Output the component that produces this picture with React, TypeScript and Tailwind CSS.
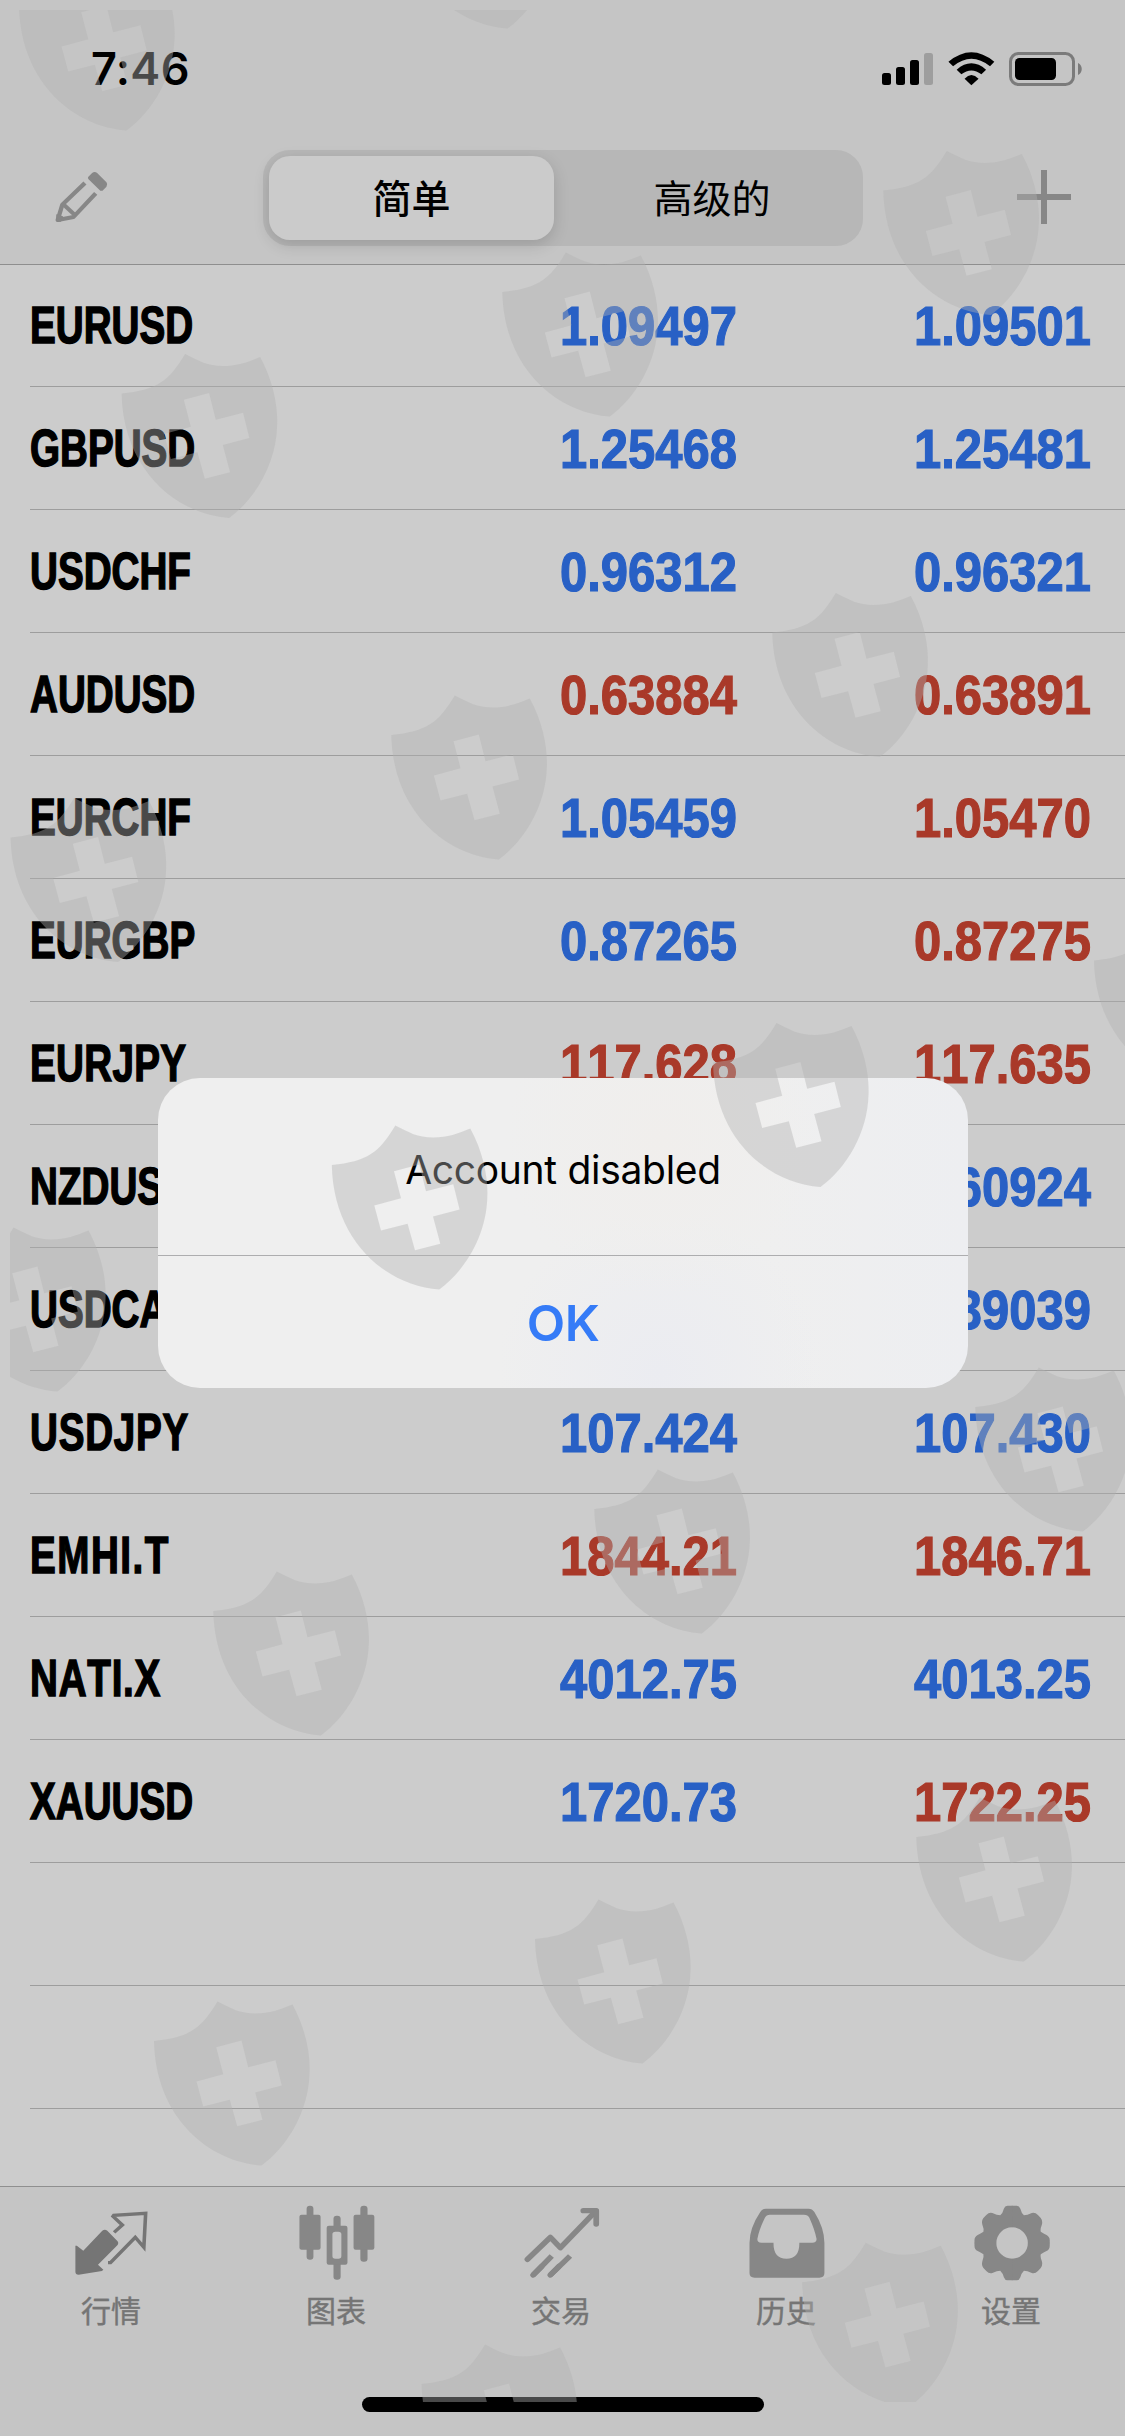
// mobile quotes screen with the "Account disabled" alert
import type { ReactNode } from 'react';

interface Quote {
  symbol: string;
  bid: string;
  ask: string;
  bidUp: boolean;
  askUp: boolean;
  tracking?: string;
}

// bids that sit fully behind the alert are left empty
const quotes: Quote[] = [
  { symbol: 'EURUSD', bid: '1.09497', ask: '1.09501', bidUp: true, askUp: true },
  { symbol: 'GBPUSD', bid: '1.25468', ask: '1.25481', bidUp: true, askUp: true },
  { symbol: 'USDCHF', bid: '0.96312', ask: '0.96321', bidUp: true, askUp: true },
  { symbol: 'AUDUSD', bid: '0.63884', ask: '0.63891', bidUp: false, askUp: false },
  { symbol: 'EURCHF', bid: '1.05459', ask: '1.05470', bidUp: true, askUp: false },
  { symbol: 'EURGBP', bid: '0.87265', ask: '0.87275', bidUp: true, askUp: false },
  { symbol: 'EURJPY', bid: '117.628', ask: '117.635', bidUp: false, askUp: false, tracking: 'tracking-[0.4px]' },
  { symbol: 'NZDUSD', bid: '', ask: '0.60924', bidUp: true, askUp: true },
  { symbol: 'USDCAD', bid: '', ask: '1.39039', bidUp: true, askUp: true },
  { symbol: 'USDJPY', bid: '107.424', ask: '107.430', bidUp: true, askUp: true, tracking: 'tracking-[1px]' },
  { symbol: 'EMHI.T', bid: '1844.21', ask: '1846.71', bidUp: false, askUp: false, tracking: 'tracking-[2px]' },
  { symbol: 'NATI.X', bid: '4012.75', ask: '4013.25', bidUp: true, askUp: true, tracking: 'tracking-[1px]' },
  { symbol: 'XAUUSD', bid: '1720.73', ask: '1722.25', bidUp: true, askUp: false },
];

// top-left peak of each watermark shield
const shields: [number, number][] = [
  [463, -135], [82, -33],
  [946.3, 151.5], [565.3, 253], [184.6, 354.5],
  [835.3, 593.5], [454.3, 696], [73.6, 798.5],
  [1157, 921.5], [776, 1023.5], [394.8, 1126], [13, 1228],
  [1038.3, 1368], [657.3, 1470], [276.3, 1572],
  [979.3, 1798], [598, 1900], [217, 2002],
  [865.2, 2243.3], [484.6, 2345],
];

const SHIELD =
  'M0 0C14 7 22 12 38 12C52 12 63 8 75 3C88 27 93 52 92 72C91 110 70 145 44 164C-10 160 -62 115 -63.5 39.5C-28 36 -16 27 0 0Z' +
  'M-1.3 45.7L5.7 72.7L-21 80L-14.3 105L12.3 98.3L19.7 124.7L45 118.3L37.7 91L64.3 84L58 58.7L30.7 65.7L24 39Z';

function Watermark() {
  return (
    <svg className="pointer-events-none absolute inset-0 z-30" width="1125" height="2436" viewBox="0 0 1125 2436">
      <clipPath id="wm">
        <rect x="10" y="10" width="1115" height="2392" />
      </clipPath>
      <g clipPath="url(#wm)" fill="#b1b1b1" fillOpacity="0.41" fillRule="evenodd">
        {shields.map(([x, y]) => (
          <path key={`${x}-${y}`} d={SHIELD} transform={`translate(${x + 0.5} ${y - 0.5})`} />
        ))}
      </g>
    </svg>
  );
}

function StatusBar() {
  return (
    <div className="flex h-[139px] items-center justify-between pl-[91px] pr-[42px]">
      <span className="pb-[2px] font-['Inter'] text-[45px] font-semibold leading-none tracking-[0.3px] text-black">7:46</span>
      <div className="flex items-center pb-[2px]">
        <svg width="52" height="34" viewBox="0 0 52 34">
          <rect x="0" y="21" width="9" height="12" rx="2.5" />
          <rect x="14" y="15" width="9" height="18" rx="2.5" />
          <rect x="28" y="8" width="9" height="25" rx="2.5" />
          <rect x="42" y="1" width="9" height="32" rx="2.5" fill="#9e9e9e" />
        </svg>
        <svg className="ml-[13px]" width="49" height="34" viewBox="1070 156 136.7 102" preserveAspectRatio="none">
          <path d="M1074 185Q1138 128 1202 185L1190 199Q1138 154 1087 199Z" />
          <path d="M1097 209Q1138 171 1179 209L1166 223Q1138 200 1110 223Z" />
          <path d="M1119 236Q1138 214 1158 236L1138 256Z" />
        </svg>
        <svg className="ml-[13px]" width="74" height="34" viewBox="0 0 74 34">
          <rect x="1.5" y="1.5" width="63" height="31" rx="8" fill="none" stroke="#7b7b7b" strokeWidth="3" />
          <rect x="6" y="6" width="41" height="22" rx="4.5" />
          <path d="M69 11C74 13 74 21 69 23Z" fill="#7b7b7b" />
        </svg>
      </div>
    </div>
  );
}

function NavBar() {
  return (
    <div className="flex h-[125px] items-start pt-[11px]">
      <div className="flex h-24 w-[263px] items-center pb-[3px] pl-[54px]">
        <svg width="56" height="54" viewBox="150.7 507 156.2 162" preserveAspectRatio="none" fill="#878787">
          <path d="M246 528L257 516Q264 510 271 516L297 544Q302 551 297 557L286 569Q281 571 277 566L247 535Q244 531 246 528Z" />
          <path d="M237 546L174 611L161 657L205 648L267 577" fill="none" stroke="#878787" strokeWidth="12" strokeLinejoin="round" />
          <path d="M177 610L210 643" fill="none" stroke="#878787" strokeWidth="12" />
          <path d="M157 640L176 646L170 662L160 663Q155 662 157 655Z" />
        </svg>
      </div>
      <div className="flex h-24 w-[600px] rounded-[27px] bg-[#b7b7b7] p-[6px] font-['Noto_Sans_CJK_SC',sans-serif] text-[39px] leading-none text-black">
        <div className="flex h-[84px] w-[285px] items-center justify-center rounded-[21px] bg-[#cbcbcb] pb-[4px] font-medium shadow-[0_5px_16px_rgba(0,0,0,0.15)]">
          简单
        </div>
        <div className="flex flex-1 items-center justify-center pb-[4px] pl-[13px]">高级的</div>
      </div>
      <div className="flex h-24 flex-1 items-center justify-end pb-[3px] pr-[54px]">
        <svg width="54" height="54" viewBox="0 0 54 54">
          <path d="M27 0V54M0 27H54" stroke="#878787" strokeWidth="6" />
        </svg>
      </div>
    </div>
  );
}

function Price({ value, up }: { value: string; up: boolean }) {
  const color = up ? 'text-[#2860c5]' : 'text-[#a93929]';
  return (
    <span className={`inline-block origin-left scale-x-[0.874] text-[56px] [-webkit-text-stroke-width:1.2px] ${color}`}>
      {value}
    </span>
  );
}

function QuoteList() {
  return (
    <div className="-mt-px flex-1 overflow-hidden bg-[#cccccc] pl-[30px] font-['Liberation_Sans',sans-serif] font-bold leading-none [font-kerning:none]">
      {quotes.map((q) => (
        <div key={q.symbol} className="flex h-[123px] items-center border-b border-[#9d9d9d] pt-[1px]">
          <div className="w-[530px] shrink-0">
            <span
              className={`inline-block origin-left scale-x-[0.75] text-[51.5px] text-black [-webkit-text-stroke-width:1.5px] ${q.tracking ?? ''}`}
            >
              {q.symbol}
            </span>
          </div>
          <div className="w-[354px] shrink-0">{q.bid && <Price value={q.bid} up={q.bidUp} />}</div>
          <div className="w-[200px] shrink-0">
            <Price value={q.ask} up={q.askUp} />
          </div>
        </div>
      ))}
      <div className="h-[123px] border-b border-[#9d9d9d]" />
      <div className="h-[123px] border-b border-[#9d9d9d]" />
    </div>
  );
}

function TabItem({ label, viewBox, children }: { label: string; viewBox: string; children: ReactNode }) {
  return (
    <div className="flex flex-1 flex-col items-center">
      <svg width="80" height="80" viewBox={viewBox} preserveAspectRatio="none" fill="#878787">
        {children}
      </svg>
      <span className="mt-[11px] pr-[3px] font-['Noto_Sans_CJK_SC',sans-serif] text-[30px] leading-[30px] text-[#757575] [-webkit-text-stroke-width:0.4px]">
        {label}
      </span>
    </div>
  );
}

const GEAR_QUARTER =
  'M-1 -112H13Q20 -112 23 -103Q26 -90 33 -83Q42 -83 55 -90Q64 -93 72 -84L80 -75Q86 -67 83 -55Q78 -42 80 -34Q88 -28 96 -24Q105 -19 105 -8V1H44V0A44 47 0 0 0 0 -47H-1Z';

function TabBar() {
  return (
    <div className="flex h-[250px] flex-col border-t border-[#8f8f8f] bg-[#c5c5c5]">
      <div className="flex pt-[16px]">
        <TabItem label="行情" viewBox="202.3 100 223.2 240">
          <g fill="#757575">
            <path d="M284 183Q291 177 298 183L326 214Q331 220 326 227L272 285L287 300L283 304L218 315Q209 315 209 306V228L213 228L231 243Z" />
            <path
              d="M317 188L340 166L314 140L316 137L405 131L400 233L376 203L307 279H300"
              fill="none"
              stroke="#757575"
              strokeWidth="10"
            />
          </g>
        </TabItem>
        <TabItem label="图表" viewBox="830 100 223.2 240">
          <rect x="854" y="108" width="19" height="162" rx="9" />
          <rect x="834" y="135" width="59" height="105" rx="6" />
          <rect x="1004" y="108" width="20" height="168" rx="9" />
          <rect x="985" y="135" width="58" height="105" rx="6" />
          <rect x="929" y="138" width="20" height="40" rx="9" />
          <rect x="929" y="275" width="20" height="55" rx="9" />
          <path
            fillRule="evenodd"
            d="M916 168H962Q968 168 968 174V279Q968 285 962 285H916Q910 285 910 279V174Q910 168 916 168ZM934 186Q926 186 926 194V259Q926 267 934 267H943Q951 267 951 259V194Q951 186 943 186Z"
          />
        </TabItem>
        <TabItem label="交易" viewBox="1457.7 100 223.2 240">
          <g fill="none" stroke="#878787" strokeWidth="16" strokeLinecap="round" strokeLinejoin="round">
            <path d="M1470 269L1534 203L1562 234L1661 124" />
            <path d="M1626 123H1662V163" />
            <path d="M1486 316L1510 290M1534 316L1558 290" />
            <path d="M1486 316L1538 259M1534 316L1589 259" strokeLinecap="butt" />
          </g>
        </TabItem>
        <TabItem label="历史" viewBox="514.8 100 223.2 240">
          <path
            fillRule="evenodd"
            d="M565 117H684Q694 117 700 127Q728 175 728 220V310Q728 324 714 324H533Q519 324 519 310V220Q519 175 549 127Q555 117 565 117ZM576 135Q566 135 562 144Q546 180 541 207Q540 219 552 219H586Q585 267 622 267Q659 267 658 219H694Q707 219 706 207Q701 180 686 144Q682 135 671 135Z"
          />
        </TabItem>
        <TabItem label="设置" viewBox="1142.4 100 223.2 240">
          <path d={GEAR_QUARTER} transform="translate(1251.5 220)" />
          <path d={GEAR_QUARTER} transform="translate(1251.5 220) scale(-1 1)" />
          <path d={GEAR_QUARTER} transform="translate(1251.5 220) scale(1 -1)" />
          <path d={GEAR_QUARTER} transform="translate(1251.5 220) scale(-1 -1)" />
        </TabItem>
      </div>
      <div className="mx-auto mt-[73px] h-[15px] w-[402px] rounded-full bg-black" />
    </div>
  );
}

function AlertDialog() {
  return (
    <div className="absolute left-[158px] top-[1078px] z-20 flex h-[310px] w-[810px] flex-col overflow-hidden rounded-[42px] bg-[#efefef] bg-[radial-gradient(circle_at_62%_20%,#f0eeec_0,transparent_28%),radial-gradient(circle_at_62%_95%,#ebecf1_0,transparent_28%),linear-gradient(90deg,transparent_75%,#edeef1_100%)] text-center font-['Inter'] leading-none">
      <div className="flex h-[177px] items-center justify-center pt-[5px]">
        <p className="text-[39px] tracking-[-0.3px] text-black">Account disabled</p>
      </div>
      <div className="flex flex-1 items-center justify-center border-t border-[#adadaf] pt-[2px]">
        <button className="text-[50px] font-semibold tracking-[-0.5px] text-[#357bf7]">OK</button>
      </div>
    </div>
  );
}

export default function App() {
  return (
    <div className="relative flex h-[2436px] w-[1125px] flex-col overflow-hidden bg-[#cccccc]">
      <div className="relative z-10 h-[265px] border-b border-[#8e8e8e] bg-[#c5c5c5]">
        <StatusBar />
        <NavBar />
      </div>
      <QuoteList />
      <TabBar />
      <AlertDialog />
      <Watermark />
    </div>
  );
}
